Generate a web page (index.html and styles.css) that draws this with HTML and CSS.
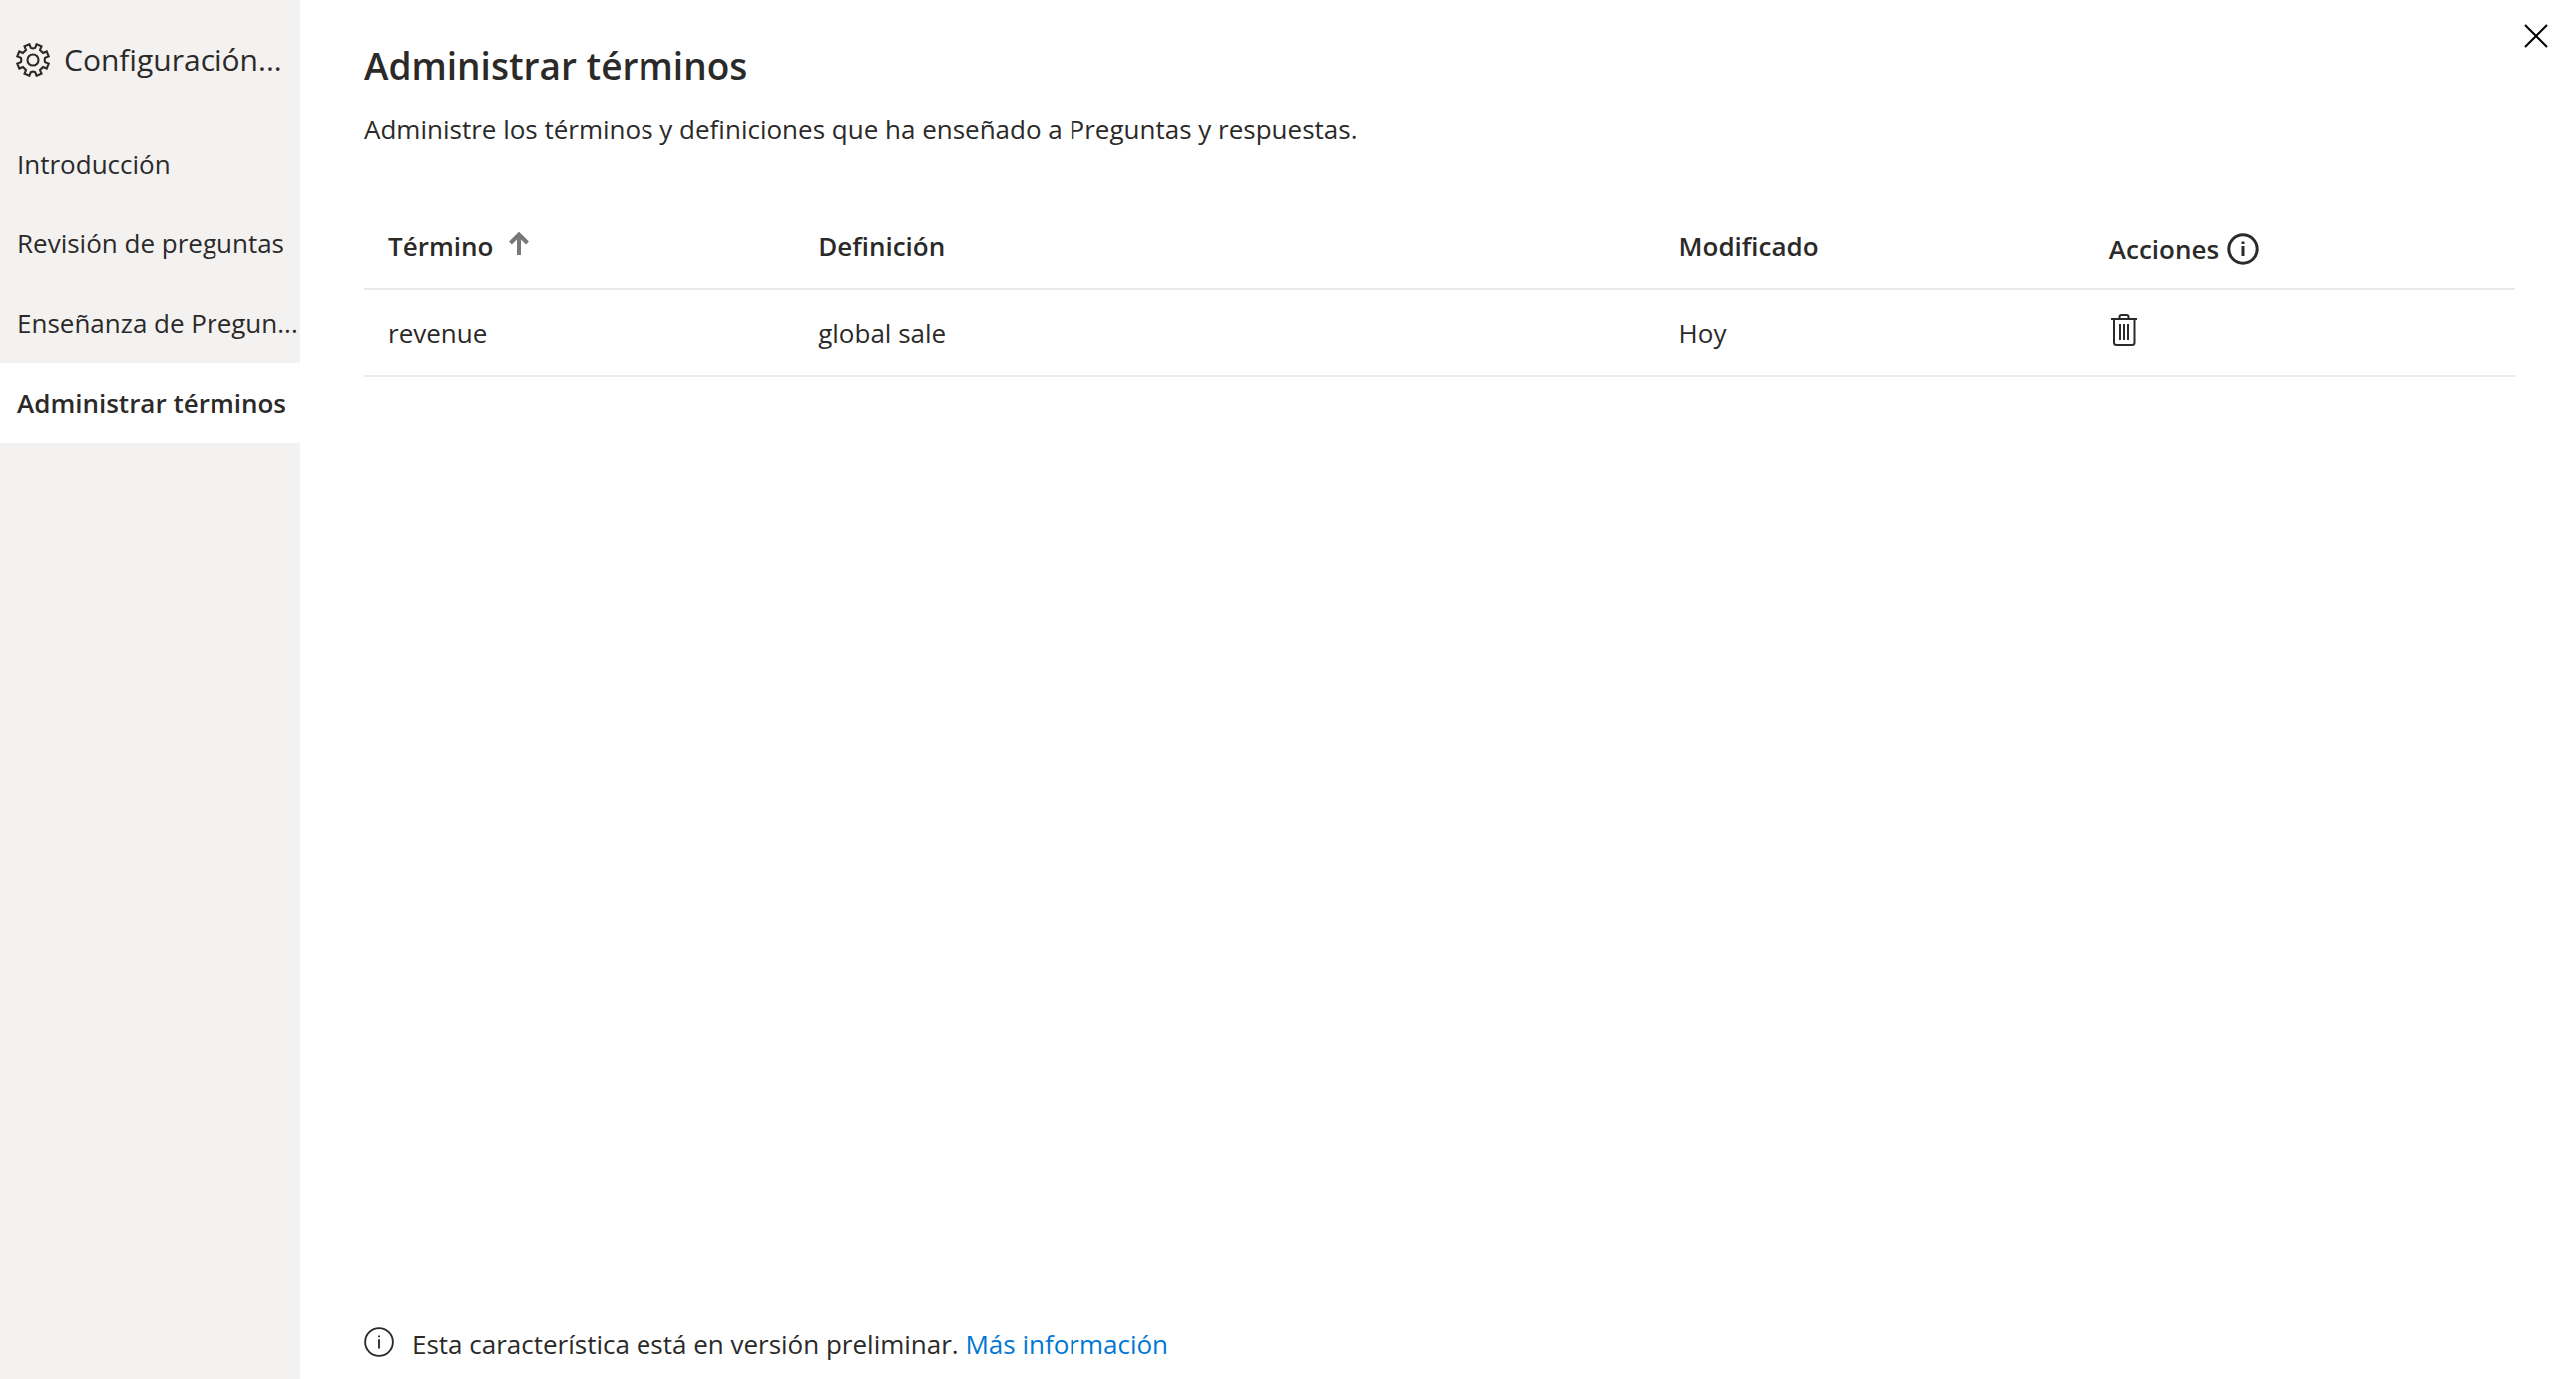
FILE: index.html
```html
<!DOCTYPE html>
<html lang="es">
<head>
<meta charset="utf-8">
<meta name="viewport" content="width=device-width, initial-scale=1">
<title>Administrar términos</title>
<link rel="stylesheet" href="styles.css">
</head>
<body>
<div class="dialog">
  <aside class="sidebar">
    <div class="sidebar-header">
      <svg class="gear" viewBox="0 0 32 32" aria-hidden="true">
        <path d="M12.6 1.2 14 4.6Q16 5.400 18 4.600L19.400 1.200 24 3.100 22.600 6.500 25.500 9.400 28.900 8 30.800 12.600 27.400 14Q26.600 16 27.400 18L30.800 19.400 28.900 24 25.500 22.600 22.600 25.500 24 28.900 19.400 30.800 18 27.400Q16 26.600 14 27.400L12.600 30.800 8 28.900 9.400 25.500 6.500 22.600 3.100 24 1.200 19.400 4.600 18Q5.400 16 4.600 14L1.200 12.600 3.100 8 6.500 9.400 9.400 6.500 8 3.100Z"/>
        <circle cx="16" cy="16" r="5.2"/>
      </svg>
      <span class="sidebar-title">Configuración...</span>
    </div>
    <nav class="nav">
      <a class="nav-item" href="#introduccion">Introducción</a>
      <a class="nav-item" href="#revision">Revisión de preguntas</a>
      <a class="nav-item" href="#ensenanza">Enseñanza de Pregun...</a>
      <a class="nav-item active" href="#terminos" aria-current="page">Administrar términos</a>
    </nav>
  </aside>
  <main class="content">
    <h1 class="title">Administrar términos</h1>
    <p class="description">Administre los términos y definiciones que ha enseñado a Preguntas y respuestas.</p>
    <table class="terms">
      <thead>
        <tr>
          <th class="col-narrow" aria-sort="ascending">
            <button class="sort" type="button">Término
              <svg class="arrow" viewBox="0 0 20 24" aria-hidden="true"><path d="M10 23V3M1.500 11 10 2.500 18.500 11"/></svg>
            </button>
          </th>
          <th class="col-wide">Definición</th>
          <th class="col-narrow">Modificado</th>
          <th class="col-narrow">
            <span class="actions-label">Acciones
              <svg class="info bold" viewBox="0 0 32 32" aria-hidden="true"><circle cx="16" cy="16" r="14.200"/><path d="M16 13V23M16 8.500V11"/></svg>
            </span>
          </th>
        </tr>
      </thead>
      <tbody>
        <tr>
          <td>revenue</td>
          <td>global sale</td>
          <td>Hoy</td>
          <td>
            <button class="icon-button delete" type="button" aria-label="Eliminar">
              <svg class="trash" viewBox="0 0 26 32" aria-hidden="true"><path d="M0 5H26M8.500 5V3Q8.500 1 10.500 1H15.500Q17.500 1 17.500 3V5M3 5V28.500Q3 31 5.500 31H21Q23.500 31 23.500 28.500V5M9 10V26M13 10V26M17 10V26"/></svg>
            </button>
          </td>
        </tr>
      </tbody>
    </table>
    <footer class="notice">
      <svg class="info small" viewBox="0 0 32 32" aria-hidden="true"><circle cx="16" cy="16" r="14.800"/><path d="M16 13V23M16 9V11"/></svg>
      <span>Esta característica está en versión preliminar. <a class="link" href="#mas">Más información</a></span>
    </footer>
  </main>
  <button class="icon-button close" type="button" aria-label="Cerrar">
    <svg class="cross" viewBox="0 0 24 24" aria-hidden="true"><path d="M1 1 23 23M23 1 1 23"/></svg>
  </button>
</div>
</body>
</html>
```
FILE: styles.css
```css
* { box-sizing: border-box; }

body {
  margin: 0;
  font-family: "Open Sans", "Noto Sans", sans-serif;
  font-size: 26px;
  line-height: 40px;
  color: #2b2a29;
  background: #fff;
}

button { font: inherit; color: inherit; background: none; border: 0; padding: 0; cursor: pointer; }
svg { display: block; flex: none; fill: none; stroke: currentColor; stroke-width: 2; }

.dialog { position: relative; display: flex; min-height: 100vh; }

.sidebar { flex: none; width: 301px; background: #f3f2f1; }
.sidebar-header { display: flex; align-items: center; gap: 14px; height: 124px; padding: 0 16px 4px; }
.sidebar-title { font-size: 30px; white-space: nowrap; }
.gear { width: 34px; height: 34px; }

.nav { display: flex; flex-direction: column; }
.nav-item { padding: 20px 0 20px 17px; color: inherit; text-decoration: none; white-space: nowrap; }
.nav-item.active { background: #fff; font-weight: 600; }

.content { flex: 1; min-width: 0; display: flex; flex-direction: column; padding: 40px 61px 15px 64px; }
.title { margin: 0; font-size: 37px; line-height: 52px; font-weight: 600; }
.description { margin: 17px 0 55px; }

.terms { width: 100%; table-layout: fixed; border-collapse: collapse; }
.terms th, .terms td { padding: 23px 24px 22px; text-align: left; vertical-align: middle; border-bottom: 2px solid #eaeaea; }
.terms th { font-weight: 600; }
.col-narrow { width: 20%; }
.col-wide { width: 40%; }
.sort { display: flex; align-items: center; gap: 16px; }
.arrow { width: 20px; height: 24px; margin-bottom: 4px; stroke: #777; stroke-width: 4; }
.actions-label { display: flex; align-items: center; gap: 8px; margin: 3px 0 -3px; }
.info { width: 32px; height: 32px; }
.info.bold { stroke-width: 3; }
.info.small { width: 30px; height: 30px; margin-bottom: 4px; }
.icon-button { display: block; }
.delete { margin: 0 0 6px 2px; }
.trash { width: 26px; height: 32px; }

.notice { display: flex; align-items: center; gap: 18px; margin-top: auto; }
.link { color: #0078d4; text-decoration: none; }

.close { position: absolute; top: 24px; right: 28px; color: #000; }
.cross { width: 24px; height: 24px; }
```
